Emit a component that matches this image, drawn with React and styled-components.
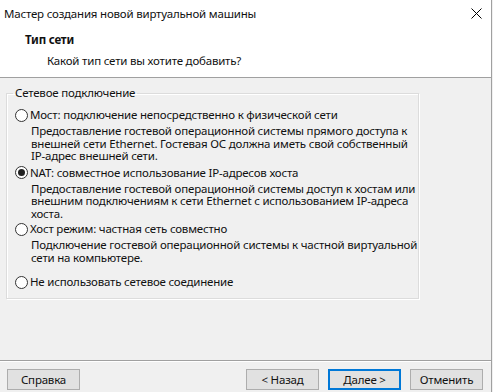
import React from "react";
import styled, { createGlobalStyle } from "styled-components";

const Global = createGlobalStyle`
  html, body { margin: 0; padding: 0; background: #f0f0f0; }
  body {
    font-family: "Noto Sans", "Liberation Sans", sans-serif;
    font-size: 11.5px;
    letter-spacing: -0.2px;
    color: #111;
  }
`;

const Window = styled.div`
  width: 492px;
  height: 392px;
  box-sizing: border-box;
  border-right: 1px solid #a0a0a0;
  display: flex;
  flex-direction: column;
  background: #f0f0f0;
`;

const Header = styled.div`
  background: #fff;
  height: 78px;
  box-sizing: border-box;
  border-bottom: 1px solid #a0a0a0;
  display: flex;
  flex-direction: column;
`;

const TitleBar = styled.div`
  display: flex;
  justify-content: space-between;
  align-items: center;
  height: 26px;
  padding-left: 4px;
  padding-right: 9px;
`;

const Close = styled.div`
  width: 11px;
  height: 11px;
  display: flex;
  margin-top: 1px;
`;

const Heading = styled.div`
  font-weight: bold;
  padding-left: 25px;
  margin-top: 6px;
  line-height: 15px;
`;

const Sub = styled.div`
  padding-left: 47px;
  margin-top: 6px;
  line-height: 15px;
`;

const Body = styled.div`
  flex: 1;
  padding: 8px 0 0 6px;
  border-bottom: 1px solid #a0a0a0;
  box-shadow: 0 1px 0 #fff;
`;

const Group = styled.fieldset`
  margin: 0;
  width: 413px;
  height: 213px;
  box-sizing: border-box;
  border: 1px solid #dcdcdc;
  box-shadow: inset 1px 1px 0 #fff, 1px 1px 0 #fff;
  padding: 0 0 0 8px;
`;

const Legend = styled.legend`
  padding: 0 2px;
  margin-left: -2px;
  line-height: 14px;
`;

const Options = styled.div`
  display: flex;
  flex-direction: column;
  padding-top: 7px;
`;

const Option = styled.div`
  display: flex;
  flex-direction: column;
  margin-bottom: ${p => p.$gap}px;
`;

const RadioRow = styled.div`
  display: flex;
  align-items: center;
  gap: 2px;
  line-height: 16px;
`;

const Radio = styled.span`
  width: 11px;
  height: 11px;
  border: 1px solid #333;
  border-radius: 50%;
  background: #fff;
  display: flex;
  align-items: center;
  justify-content: center;
  flex: none;
  &::after {
    content: "";
    display: ${p => (p.$checked ? "block" : "none")};
    width: 7px;
    height: 7px;
    border-radius: 50%;
    background: #222;
  }
`;

const Desc = styled.div`
  padding-left: 16px;
  margin-top: 2px;
  line-height: 12.5px;
  white-space: nowrap;
`;

const Footer = styled.div`
  height: 31px;
  display: flex;
  align-items: flex-start;
  padding: 8px 8px 0 7px;
  box-sizing: border-box;
`;

const Button = styled.button`
  width: 73px;
  height: 21px;
  box-sizing: border-box;
  font-family: inherit;
  font-size: 11.5px;
  letter-spacing: -0.2px;
  padding: 0;
  background: #e1e1e1;
  border: 1px solid ${p => (p.$primary ? "#0078d7" : "#adadad")};
  box-shadow: ${p => (p.$primary ? "inset 0 0 0 1px #0078d7" : "none")};
  color: #111;
  margin-left: ${p => p.$ml || 0}px;
`;

const Spacer = styled.div`
  flex: 1;
`;

const options = [
  {
    label: "Мост: подключение непосредственно к физической сети",
    desc: [
      "Предоставление гостевой операционной системы прямого доступа к",
      "внешней сети Ethernet. Гостевая ОС должна иметь свой собственный",
      "IP-адрес внешней сети.",
    ],
    gap: 2,
  },
  {
    label: "NAT: совместное использование IP-адресов хоста",
    desc: [
      "Предоставление гостевой операционной системы доступ к хостам или",
      "внешним подключениям к сети Ethernet с использованием IP-адреса",
      "хоста.",
    ],
    checked: true,
    gap: 1,
  },
  {
    label: "Хост режим: частная сеть совместно",
    desc: [
      "Подключение гостевой операционной системы к частной виртуальной",
      "сети на компьютере.",
    ],
    gap: 10,
  },
  { label: "Не использовать сетевое соединение", gap: 0 },
];

export default function App() {
  return (
    <>
      <Global />
      <Window>
        <Header>
          <TitleBar>
            <span>Мастер создания новой виртуальной машины</span>
            <Close>
              <svg width="11" height="11" viewBox="0 0 11 11">
                <path d="M0.5 0.5 L10.5 10.5 M10.5 0.5 L0.5 10.5" stroke="#000" strokeWidth="1" />
              </svg>
            </Close>
          </TitleBar>
          <Heading>Тип сети</Heading>
          <Sub>Какой тип сети вы хотите добавить?</Sub>
        </Header>
        <Body>
          <Group>
            <Legend>Сетевое подключение</Legend>
            <Options>
              {options.map((o, i) => (
                <Option key={i} $gap={o.gap}>
                  <RadioRow>
                    <Radio $checked={o.checked} />
                    <span>{o.label}</span>
                  </RadioRow>
                  {o.desc && (
                    <Desc>
                      {o.desc.map((line, j) => (
                        <div key={j}>{line}</div>
                      ))}
                    </Desc>
                  )}
                </Option>
              ))}
            </Options>
          </Group>
        </Body>
        <Footer>
          <Button>Справка</Button>
          <Spacer />
          <Button>&lt; Назад</Button>
          <Button $primary $ml={9}>Далее &gt;</Button>
          <Button $ml={9}>Отменить</Button>
        </Footer>
      </Window>
    </>
  );
}
